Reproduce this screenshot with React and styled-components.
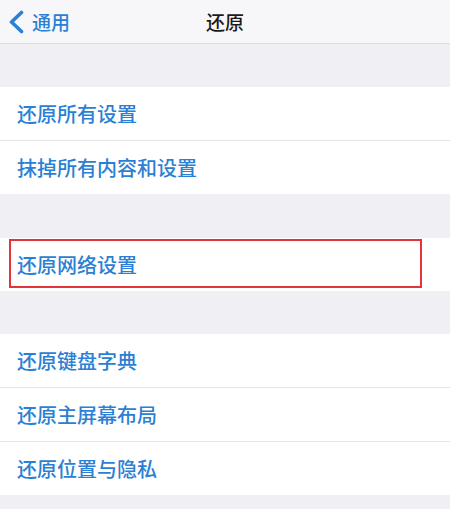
import React from "react";
import styled, { createGlobalStyle } from "styled-components";

const GlobalStyle = createGlobalStyle`
  html, body {
    margin: 0;
    padding: 0;
    background: #efeff4;
    font-family: "Noto Sans CJK SC", "Noto Sans", sans-serif;
  }
`;

const Page = styled.div`
  width: 450px;
  height: 509px;
  overflow: hidden;
  background: #efeff4;
`;

const NavBar = styled.div`
  height: 43px;
  display: grid;
  grid-template-columns: 1fr auto 1fr;
  align-items: center;
  background: #f7f7f9;
  border-bottom: 1px solid #dedee2;
`;

const BackButton = styled.div`
  display: flex;
  align-items: center;
  gap: 7px;
  padding-left: 8px;
  color: #2b7fd4;
  font-size: 19px;
  font-weight: 500;
`;

const Title = styled.div`
  font-size: 19px;
  font-weight: 500;
  color: #1a1a1a;
`;

const Group = styled.div`
  margin-top: ${(p) => p.$gap}px;
  background: #ffffff;
`;

const Row = styled.div`
  position: relative;
  height: 53px;
  display: flex;
  align-items: center;
  padding-left: 17px;
  color: #2b7fd4;
  font-size: 20px;
  font-weight: 500;

  & + & {
    border-top: 1px solid #e6e6ea;
  }

  &::after {
    content: "";
    display: ${(p) => (p.$highlight ? "block" : "none")};
    position: absolute;
    left: 9px;
    top: 1px;
    width: 413px;
    height: 49px;
    box-sizing: border-box;
    border: 2.5px solid #e3343a;
  }
`;

const groups = [
  { gap: 43, items: ["还原所有设置", "抹掉所有内容和设置"] },
  { gap: 44, items: ["还原网络设置"], highlight: 0 },
  { gap: 43, items: ["还原键盘字典", "还原主屏幕布局", "还原位置与隐私"] },
];

export default function App() {
  return (
    <Page>
      <GlobalStyle />
      <NavBar>
        <BackButton>
          <svg width="17" height="24" viewBox="0 0 17 24">
            <path
              d="M13.5 2.5 L3.5 12 L13.5 21.5"
              fill="none"
              stroke="#2b7fd4"
              strokeWidth="3.6"
              strokeLinecap="round"
              strokeLinejoin="round"
            />
          </svg>
          通用
        </BackButton>
        <Title>还原</Title>
        <div />
      </NavBar>
      {groups.map((g, gi) => (
        <Group key={gi} $gap={g.gap}>
          {g.items.map((item, i) => (
            <Row key={item} $highlight={g.highlight === i}>
              {item}
            </Row>
          ))}
        </Group>
      ))}
    </Page>
  );
}
